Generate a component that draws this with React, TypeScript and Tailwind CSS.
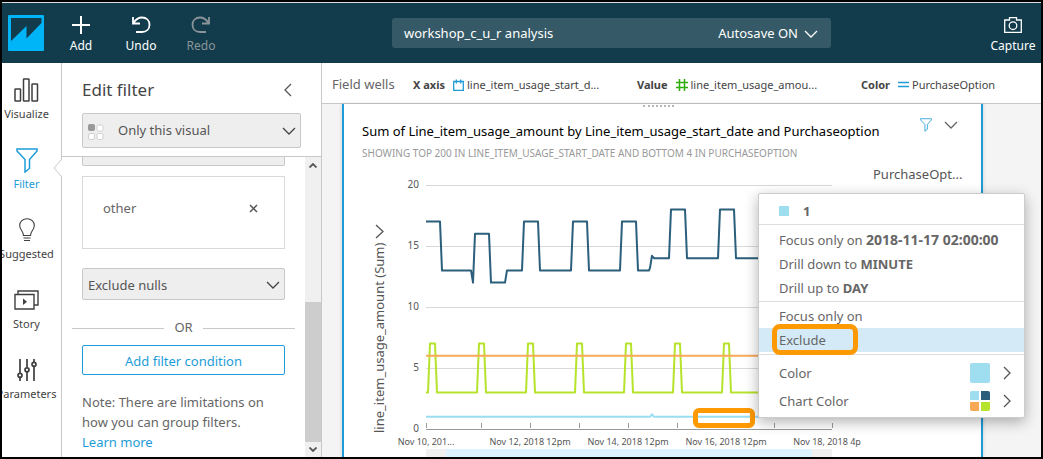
import type { ReactNode } from 'react';

type Point = [number, number];

const UNIT = 12.2;
const TOP = 21;
const DAY = 49;

const yOf = (value: number) => TOP + (20 - value) * UNIT;
const toPoints = (points: Point[]) =>
  points.map(([x, v]) => `${x},${yOf(v)}`).join(' ');

const onDemand: Point[] = [
  [0, 17], [14, 17], [16, 13], [45, 13], [47, 12], [49, 16], [63, 16], [65, 12],
  [79, 12], [81, 13], [96, 13], [98, 17], [112, 17], [114, 13], [145, 13],
  [147, 17], [161, 17], [163, 13], [194, 13], [196, 17], [210, 17], [212, 13],
  [223, 13], [224, 13.2], [226, 14.2], [228, 14], [243, 14], [245, 18], [259, 18],
  [261, 14], [292, 14], [294, 18], [308, 18], [310, 14], [406, 14],
];

const spot: Point[] = [[0, 3]];
for (let day = 0; day < 8; day += 1) {
  const x = day * DAY + 2;
  spot.push([x, 3], [x + 2, 7], [x + 7, 7], [x + 9, 3]);
}
spot.push([406, 3]);

const reserved: Point[] = [[0, 6], [406, 6]];
const one: Point[] = [[0, 1], [224, 1], [226, 1.2], [228, 1], [406, 1]];

function Chevron({ className, d = 'M1 1l6 6 6-6', box = '0 0 14 8' }: { className: string; d?: string; box?: string }) {
  return (
    <svg viewBox={box} className={className} fill="none" stroke="currentColor" strokeWidth="1.3" aria-hidden="true">
      <path d={d} />
    </svg>
  );
}

function ChevronRight() {
  return <Chevron className="h-[14px] w-2 text-[#555]" d="M1 1l6 6-6 6" box="0 0 8 14" />;
}

function FunnelIcon({ className }: { className: string }) {
  return (
    <svg viewBox="0 0 22 25" className={className} fill="none" stroke="currentColor" strokeWidth="1.5" aria-hidden="true">
      <path d="M1 1h20v2l-7.500 8.500v9l-4.500 3.500V11.500L1 3z" />
    </svg>
  );
}

function ToolButton({ label, children, className = 'w-[60px]' }: { label: string; children: ReactNode; className?: string }) {
  return (
    <button type="button" className={`flex flex-col items-center text-[12px] leading-[18px] ${className}`}>
      <span className="flex h-[25px] items-center">{children}</span>
      {label}
    </button>
  );
}

function Header() {
  return (
    <header className="flex h-[60px] shrink-0 items-start bg-[#123c4c] text-white">
      <svg viewBox="0 0 36 36" className="mt-3 ml-1.5 size-9 shrink-0" role="img" aria-label="QuickSight">
        <rect width="36" height="36" rx="1" fill="#00b5f7" />
        <path d="M3 3h30.500v5L18.500 23.500V11L3 26z" fill="#123c4c" />
      </svg>
      <div className="ml-[7px] flex pt-[9px]">
        <ToolButton label="Add">
          <svg viewBox="0 0 18 18" className="size-[18px]" stroke="currentColor" strokeWidth="2" aria-hidden="true">
            <path d="M9 0v18M0 9h18" />
          </svg>
        </ToolButton>
        <ToolButton label="Undo">
          <svg viewBox="0 0 20 18" className="h-[18px] w-5" fill="none" stroke="currentColor" strokeWidth="1.8" aria-hidden="true">
            <path d="M2 1v6.500h7M2.500 7C5 3 8 1.500 11 1.500c4.500 0 7.500 3 7.500 7.200 0 4.300-3 7.300-7.500 7.300H5" />
          </svg>
        </ToolButton>
        <ToolButton label="Redo" className="w-[60px] text-[#8b9498]">
          <svg viewBox="0 0 20 18" className="h-[18px] w-5" fill="none" stroke="currentColor" strokeWidth="1.8" aria-hidden="true">
            <path d="M18 1v6.500h-7M17.500 7C15 3 12 1.500 9 1.500c-4.500 0-7.500 3-7.500 7.200C1.500 13 4.500 16 9 16h6" />
          </svg>
        </ToolButton>
      </div>
      <div className="mt-[15px] mr-[154px] ml-[161px] flex h-[30px] flex-1 items-center justify-between rounded-[3px] bg-[#355966] pt-1 pr-[13px] pb-0.5 pl-3 text-[13px] whitespace-nowrap">
        <span>workshop_c_u_r analysis</span>
        <button type="button" className="flex items-center gap-1.5">
          Autosave ON
          <Chevron className="h-2 w-[14px]" />
        </button>
      </div>
      <div className="pt-[9px]">
        <ToolButton label="Capture" className="w-14">
          <svg viewBox="0 0 18 16" className="h-4 w-[18px]" fill="none" stroke="currentColor" strokeWidth="1.3" aria-hidden="true">
            <path d="M.7 3h4.800V.7h7V3h4.800v12.300H.7z" />
            <circle cx="9" cy="8.700" r="3.800" />
          </svg>
        </ToolButton>
      </div>
    </header>
  );
}

function RailItem({ label, children, active = false }: { label: string; children: ReactNode; active?: boolean }) {
  return (
    <li className="relative">
      <button
        type="button"
        className={`flex w-[49px] flex-col items-center text-[11px] leading-[18px] whitespace-nowrap ${active ? 'text-[#1e9cd7]' : 'text-[#3f3f3f]'}`}
      >
        <span className="flex h-[30px] items-center justify-center">{children}</span>
        {label}
      </button>
      {active && (
        <svg viewBox="0 0 9 18" className="absolute top-[14px] left-[51px] h-[18px] w-[9px]" aria-hidden="true">
          <path d="M9 0v18L1 9z" fill="#fff" />
          <path d="M9 0L1 9l8 9" fill="none" stroke="#c8c8c8" />
        </svg>
      )}
    </li>
  );
}

function Rail() {
  return (
    <nav className="w-[60px] shrink-0 border-r border-[#c8c8c8] pt-3">
      <ul className="flex flex-col gap-[22px]">
        <RailItem label="Visualize">
          <svg viewBox="0 0 25 24" className="h-6 w-[25px]" fill="none" stroke="currentColor" strokeWidth="1.5" aria-hidden="true">
            <rect x="1" y="11" width="5.500" height="12" rx=".5" />
            <rect x="9.500" y="1" width="5.500" height="22" rx=".5" />
            <rect x="18" y="6" width="5.500" height="17" rx=".5" />
          </svg>
        </RailItem>
        <RailItem label="Filter" active>
          <FunnelIcon className="h-[25px] w-[22px]" />
        </RailItem>
        <RailItem label="Suggested">
          <svg viewBox="0 0 16 24" className="h-6 w-4" fill="none" stroke="currentColor" strokeWidth="1.1" aria-hidden="true">
            <path d="M4.500 17.500C4.500 13 .7 12 .7 7.500.7 3.500 3.800.7 8 .7s7.300 2.800 7.300 6.800c0 4.500-3.800 5.500-3.800 10zM4.500 20h7M5 22.500h6" />
          </svg>
        </RailItem>
        <RailItem label="Story">
          <svg viewBox="0 0 25 20" className="h-5 w-[25px]" fill="none" stroke="currentColor" strokeWidth="1.4" aria-hidden="true">
            <path d="M1 4.500h19V19H1zM4 4.500V1h20v14h-4" />
            <path d="M9 8.500v6.500l4-3.200z" fill="currentColor" stroke="none" />
          </svg>
        </RailItem>
        <RailItem label="Parameters">
          <svg viewBox="0 0 20 22" className="h-[22px] w-5" fill="none" stroke="currentColor" strokeWidth="1.700" aria-hidden="true">
            <path d="M3 0v14M3 18.500V22M10 0v8.500M10 13v9M17 0v3M17 7.500V22" />
            <circle cx="3" cy="16.300" r="2" />
            <circle cx="10" cy="10.800" r="2" />
            <circle cx="17" cy="5.300" r="2" />
          </svg>
        </RailItem>
      </ul>
    </nav>
  );
}

function FilterPanel() {
  return (
    <section className="flex w-[260px] shrink-0 flex-col border-r border-[#c8c8c8] text-[13px] text-[#666]">
      <div className="border-b border-[#c8c8c8] px-5 pb-2">
        <div className="flex h-[50px] items-center justify-between pt-1">
          <h2 className="text-[17px] leading-6 text-[#444]">Edit filter</h2>
          <button type="button" aria-label="Collapse panel" className="mr-[9px] text-[#555]">
            <Chevron className="h-[14px] w-2" d="M7 1L1 7l6 6" box="0 0 8 14" />
          </button>
        </div>
        <div className="relative">
          <select aria-label="Filter scope" className="h-[35px] w-full appearance-none rounded-[2px] border border-[#c8c8c8] bg-[#eee] pl-[35px] text-[#555]">
            <option>Only this visual</option>
          </select>
          <svg viewBox="0 0 16 16" className="pointer-events-none absolute top-[11px] left-1.5 size-4" fill="#fff" stroke="#d0d0d0" aria-hidden="true">
            <rect x=".5" y=".5" width="6" height="6" rx="1" fill="#999" stroke="#999" />
            <rect x="9" y="1" width="6" height="6" rx="1.500" />
            <rect x=".5" y="9.500" width="6" height="6" rx="1.500" />
            <rect x="9" y="9.500" width="6" height="6" rx="1.500" />
          </svg>
          <Chevron className="pointer-events-none absolute top-[14px] right-[5px] h-2 w-[14px] text-[#444]" />
        </div>
      </div>
      <div className="flex min-h-0 flex-1">
        <div className="min-w-0 flex-1 overflow-hidden px-5">
          <div className="h-[9px] rounded-b-[2px] border border-t-0 border-[#c8c8c8] bg-[#eee]" />
          <div className="mt-[10px] flex h-[73px] items-center justify-between border border-[#d9d9d9] px-5 pb-2">
            <span>other</span>
            <button type="button" aria-label="Remove other" className="mr-1.5">
              <svg viewBox="0 0 9 9" className="size-[9px]" stroke="#555" strokeWidth="1.500" aria-hidden="true">
                <path d="M1 1l7 7M8 1L1 8" />
              </svg>
            </button>
          </div>
          <div className="relative mt-[19px]">
            <select aria-label="Null handling" className="h-8 w-full appearance-none rounded-[2px] border border-[#c8c8c8] bg-[#eee] pt-[3px] pl-[5px] text-[#555]">
              <option>Exclude nulls</option>
            </select>
            <Chevron className="pointer-events-none absolute top-[13px] right-[5px] h-2 w-[14px] text-[#444]" />
          </div>
          <div className="-mx-2.5 mt-[19px] flex h-[18px] items-center justify-between gap-[10px]">
            <span className="h-px flex-1 bg-[#c8c8c8]" />
            OR
            <span className="h-px flex-1 bg-[#c8c8c8]" />
          </div>
          <button type="button" className="mt-2 h-[30px] w-full rounded-[2px] border border-[#1e9cd7] pt-1 text-[#1e9cd7]">
            Add filter condition
          </button>
          <p className="mt-[17px] leading-5">
            Note: There are limitations on how you can group filters.{' '}
            <a href="#learn" className="block text-[#1e9cd7]">Learn more</a>
          </p>
        </div>
        <div className="flex w-4 shrink-0 flex-col items-center bg-[#f0f0f0] text-[#555]" aria-hidden="true">
          <svg viewBox="0 0 8 5" className="my-[6px] h-[5px] w-2 shrink-0" fill="none" stroke="currentColor" strokeWidth="1.800">
            <path d="M.5 4.500L4 1l3.500 3.500" />
          </svg>
          <div className="flex w-full flex-1 flex-col justify-end">
            <div className="h-[140px] bg-[#cdcdcd]" />
          </div>
          <svg viewBox="0 0 8 5" className="my-[5px] h-[5px] w-2 shrink-0" fill="none" stroke="currentColor" strokeWidth="1.800">
            <path d="M.5.5L4 4 7.500.5" />
          </svg>
        </div>
      </div>
    </section>
  );
}

function Well({ name, value, children }: { name: string; value: string; children: ReactNode }) {
  return (
    <div className="flex w-56 shrink-0 items-center text-[11px] text-[#444]">
      <span className="mr-2 font-bold">{name}</span>
      {children}
      <span className="ml-[3px]">{value}</span>
    </div>
  );
}

function FieldWells() {
  return (
    <div className="flex h-[41px] shrink-0 items-center overflow-hidden border-b border-[#c8c8c8] pt-1 pl-[10px] whitespace-nowrap">
      <span className="w-[81px] shrink-0 text-[13px] text-[#666]">Field wells</span>
      <Well name="X axis" value="line_item_usage_start_d...">
        <svg viewBox="0 0 11 12" className="h-3 w-[11px]" fill="none" stroke="#1e9cd7" strokeWidth="1.300" aria-hidden="true">
          <path d="M.7 2.500h9.600v8.800H.7zM3.300.5v4M7.700.5v4" />
        </svg>
      </Well>
      <Well name="Value" value="line_item_usage_amou...">
        <svg viewBox="0 0 12 12" className="size-3" fill="none" stroke="#2eae0c" strokeWidth="1.500" aria-hidden="true">
          <path d="M3.500 0v12M8.500 0v12M0 3.500h12M0 8.500h12" />
        </svg>
      </Well>
      <Well name="Color" value="PurchaseOption">
        <svg viewBox="0 0 11 8" className="h-2 w-[11px]" stroke="#1e9cd7" strokeWidth="1.500" aria-hidden="true">
          <path d="M0 1.500h11M0 5.500h11" />
        </svg>
      </Well>
    </div>
  );
}

const xLabels: { x: number; text: string }[] = [
  { x: 0, text: 'Nov 10, 201...' },
  { x: 104, text: 'Nov 12, 2018 12pm' },
  { x: 202, text: 'Nov 14, 2018 12pm' },
  { x: 300, text: 'Nov 16, 2018 12pm' },
  { x: 401, text: 'Nov 18, 2018 4p' },
];

const ticks = [0, 55, 104, 153, 202, 251, 300, 348, 406];

function LineChart() {
  return (
    <svg width="511" height="293" viewBox="-64 0 511 293" className="block shrink-0" role="img" aria-label="Usage amount by start date">
      <g stroke="#d9d9d9">
        {[20, 15, 10, 5].map((v) => (
          <path key={v} d={`M0 ${Math.round(yOf(v)) + 0.5}h406`} />
        ))}
      </g>
      <g className="fill-[#555] text-[10px]" textAnchor="end">
        {[20, 15, 10, 5, 0].map((v) => (
          <text key={v} x="-7" y={Math.round(yOf(v)) + 3}>{v}</text>
        ))}
      </g>
      <g stroke="#999">
        <path d="M0 265.500h406" />
        {ticks.map((x) => (
          <path key={x} d={`M${x + 0.5} 259v5`} />
        ))}
      </g>
      <g fill="none" strokeWidth="2" strokeLinejoin="round">
        <polyline points={toPoints(onDemand)} stroke="#2b5f7b" />
        <polyline points={toPoints(spot)} stroke="#b6e32b" />
        <polyline points={toPoints(reserved)} stroke="#f9a957" />
        <polyline points={toPoints(one)} stroke="#9bddf1" />
      </g>
      <g className="fill-[#555] text-[9px]" textAnchor="middle">
        {xLabels.map(({ x, text }) => (
          <text key={x} x={x} y="281">{text}</text>
        ))}
      </g>
      <rect x="0" y="285" width="406" height="8" fill="#f0f0f0" />
      <rect x="20" y="285" width="366" height="8" fill="#dcf2ff" />
      <text transform="translate(-42 269) rotate(-90)" className="fill-[#555] text-[13px]">
        line_item_usage_amount (Sum)
      </text>
      <path d="M-50 61l7 6.500-7 6.500" fill="none" stroke="#555" strokeWidth="1.300" />
    </svg>
  );
}

function ContextMenu() {
  const item = 'block h-6 w-full px-5 text-left';
  return (
    <div className="absolute top-[89px] left-[436px] w-[267px] rounded-[2px] border border-[#ccc] bg-white text-[13px] leading-6 whitespace-nowrap text-[#666] shadow-[0_4px_14px_rgba(0,0,0,0.3)]">
      <div className="flex h-[31px] items-center gap-[14px] border-b border-[#ddd] px-5 pt-1 font-bold">
        <span className="size-[10px] bg-[#9edef0]" />1
      </div>
      <div className="border-b border-[#ddd] pt-[3px] pb-px">
        <button type="button" className={item}>Focus only on <b className="text-[14px]">2018-11-17 02:00:00</b></button>
        <button type="button" className={item}>Drill down to <b>MINUTE</b></button>
        <button type="button" className={item}>Drill up to <b>DAY</b></button>
      </div>
      <div className="border-b border-[#ddd] py-0.5">
        <button type="button" className={item}>Focus only on</button>
        <div className="relative bg-[#d4ebf7]">
          <button type="button" className={item}>Exclude</button>
          <span className="pointer-events-none absolute -top-1 left-[13px] h-[31px] w-[86px] rounded-lg border-[5px] border-[#ff9900]" />
        </div>
      </div>
      <div className="pt-1 pb-0.5">
        <button type="button" className="flex h-7 w-full items-center pr-[13px] pl-5">
          <span className="flex-1 text-left">Color</span>
          <span className="mr-[13px] size-5 rounded-[2px] bg-[#9edef0]" />
          <ChevronRight />
        </button>
        <button type="button" className="flex h-7 w-full items-center pr-[13px] pl-5">
          <span className="flex-1 text-left">Chart Color</span>
          <span className="mr-[13px] grid size-5 grid-cols-2 gap-0.5 overflow-hidden rounded-[2px]">
            <span className="bg-[#9edef0]" />
            <span className="bg-[#2b5f7b]" />
            <span className="bg-[#f7a955]" />
            <span className="bg-[#b6e32b]" />
          </span>
          <ChevronRight />
        </button>
      </div>
    </div>
  );
}

function Visual() {
  return (
    <article className="relative mr-[58px] ml-5 flex h-full flex-col overflow-hidden border-x-2 border-[#1e9cd7] bg-white pl-[18px] shadow-[0_0_4px_rgba(0,0,0,0.15)]">
      <div className="flex h-1.5 items-center justify-center pr-[26px]">
        <span className="w-[31px] border-t-2 border-dotted border-[#b5b5b5]" />
      </div>
      <div className="flex pt-[13px]">
        <div className="min-w-0 flex-1 whitespace-nowrap">
          <h3 className="text-[13px] leading-5 text-black">
            Sum of Line_item_usage_amount by Line_item_usage_start_date and Purchaseoption
          </h3>
          <p className="mt-[3px] text-[10px] leading-[18px] text-[#999]">
            SHOWING TOP 200 IN LINE_ITEM_USAGE_START_DATE AND BOTTOM 4 IN PURCHASEOPTION
          </p>
        </div>
        <div className="flex h-2 items-center gap-3 pr-[23px]">
          <FunnelIcon className="h-[14px] w-3 text-[#1e9cd7]" />
          <Chevron className="h-2 w-[14px] text-[#666]" />
        </div>
      </div>
      <div className="mt-0.5 flex">
        <LineChart />
        <span className="text-[13px] leading-5 whitespace-nowrap text-[#555]">PurchaseOpt...</span>
      </div>
      <span className="pointer-events-none absolute top-[304px] left-[349px] h-5 w-[62px] rounded-md border-[5px] border-[#ff9900]" />
    </article>
  );
}

export default function App() {
  return (
    <div className="flex h-screen flex-col overflow-hidden border-2 border-black bg-white font-['Noto_Sans',sans-serif]">
      <div className="h-px shrink-0 bg-[#ddd]" />
      <Header />
      <div className="flex min-h-0 flex-1">
        <Rail />
        <FilterPanel />
        <main className="flex min-w-0 flex-1 flex-col">
          <FieldWells />
          <div className="relative min-h-0 flex-1 bg-[#f4f4f4]">
            <Visual />
            <ContextMenu />
          </div>
        </main>
      </div>
    </div>
  );
}
